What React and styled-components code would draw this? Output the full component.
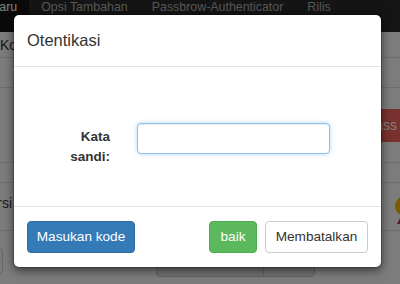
import React from "react";
import styled, { createGlobalStyle } from "styled-components";

const GlobalStyle = createGlobalStyle`
  html, body {
    margin: 0;
    padding: 0;
  }
  body {
    width: 400px;
    height: 284px;
    overflow: hidden;
    font-family: "Liberation Sans", Arial, Helvetica, sans-serif;
    color: #333;
  }
`;

const Page = styled.div`
  position: relative;
  width: 400px;
  height: 284px;
  overflow: hidden;
  background: #f8f8f8;
`;

const Navbar = styled.nav`
  height: 32px;
  background: #282828;
  overflow: hidden;
`;

const NavList = styled.ul`
  display: flex;
  margin: 0 0 0 -17px;
  padding: 0;
  list-style: none;
  height: 100%;
`;

const NavItem = styled.li`
  padding: 0 12px;
  font-size: 12.4px;
  line-height: 20px;
  margin-top: -3px;
  height: 35px;
  white-space: nowrap;
  color: ${(p) => (p.$active ? "#fff" : "#acacac")};
  background: ${(p) => (p.$active ? "#141414" : "transparent")};

  &:first-child {
    padding-left: 8px;
  }
`;

const Row = styled.div`
  box-sizing: border-box;
  height: ${(p) => p.$h}px;
  border-bottom: ${(p) => (p.$last ? "none" : "1px solid #dcdcdc")};
  display: flex;
  align-items: ${(p) => (p.$top ? "flex-start" : "center")};
  justify-content: ${(p) => (p.$top ? "flex-start" : "space-between")};
  font-size: 14px;
`;

const RowText = styled.span`
  margin-left: ${(p) => p.$shift || 0}px;
  padding-bottom: ${(p) => p.$lift || 0}px;
  white-space: nowrap;
  color: #333;
`;

const DangerButton = styled.span`
  margin-left: auto;
  margin-right: -8px;
  height: 33px;
  line-height: 33px;
  padding: 0 11px 0 12px;
  background: #f0625c;
  color: #fff;
  font-size: 14px;
  border-radius: 4px;
`;

const Coin = styled.svg`
  margin-right: -15px;
  margin-top: 6px;
  flex: none;
`;

const GhostInput = styled.div`
  box-sizing: border-box;
  margin: 17px 0 0 -40px;
  width: 43px;
  height: 27px;
  border: 1px solid #cfcfcf;
  border-radius: 4px;
  background: #f4f4f4;
`;

const BtnGroup = styled.div`
  display: flex;
  margin: 9px 0 0 153px;
  height: 37px;
  box-sizing: border-box;
  border: 1px solid #c6c6c6;
  border-radius: 4px;
  background: #e2e2e2;
  overflow: hidden;
`;

const GroupPart = styled.div`
  width: ${(p) => p.$w}px;
  border-left: ${(p) => (p.$first ? "none" : "1px solid #c6c6c6")};
`;

const Backdrop = styled.div`
  position: absolute;
  inset: 0;
  background: rgba(0, 0, 0, 0.5);
  padding: 14px 0 0 13px;
`;

const Dialog = styled.div`
  box-sizing: border-box;
  width: 369px;
  background: #fff;
  background-clip: padding-box;
  border: 1px solid rgba(0, 0, 0, 0.2);
  border-radius: 6px;
  box-shadow: 0 3px 9px rgba(0, 0, 0, 0.5);
`;

const Header = styled.div`
  height: 51px;
  padding: 0 13px;
  display: flex;
  align-items: center;
  border-bottom: 1px solid #e5e5e5;
`;

const Title = styled.h4`
  margin: 0;
  font-size: 16.5px;
  font-weight: 400;
  color: #333;
`;

const Body = styled.div`
  box-sizing: border-box;
  height: 139px;
  padding: 56px 15px 0;
  display: flex;
  align-items: flex-start;
`;

const Label = styled.label`
  box-sizing: border-box;
  width: 81px;
  padding-left: 34px;
  margin-top: 4px;
  text-align: right;
  font-size: 13.5px;
  font-weight: 700;
  line-height: 20px;
  color: #333;
`;

const Input = styled.input`
  box-sizing: border-box;
  margin-left: 27px;
  width: 193px;
  height: 31px;
  padding: 0 10px;
  border: 1px solid #8fc0ee;
  border-radius: 4px;
  outline: none;
  box-shadow: inset 0 1px 1px rgba(0, 0, 0, 0.075), 0 0 4px rgba(102, 175, 233, 0.5);
  font: inherit;
`;

const Footer = styled.div`
  border-top: 1px solid #e5e5e5;
  padding: 14px 13px;
  display: flex;
  justify-content: space-between;
  align-items: center;
`;

const Actions = styled.div`
  display: flex;
  gap: 8px;
`;

const variants = {
  primary: { bg: "#337ab7", border: "#2e6da4", color: "#fff" },
  success: { bg: "#5cb85c", border: "#4cae4c", color: "#fff" },
  default: { bg: "#fff", border: "#ccc", color: "#333" },
};

const Button = styled.button`
  box-sizing: border-box;
  width: ${(p) => p.$w}px;
  height: 32px;
  padding: 0;
  border-radius: 4px;
  font-family: inherit;
  font-size: 13.6px;
  line-height: 30px;
  text-align: center;
  white-space: nowrap;
  cursor: pointer;
  background: ${(p) => variants[p.$variant].bg};
  border: 1px solid ${(p) => variants[p.$variant].border};
  color: ${(p) => variants[p.$variant].color};
`;

export default function App() {
  return (
    <>
      <GlobalStyle />
      <Page>
        <Navbar>
          <NavList>
            <NavItem $active>Baru</NavItem>
            <NavItem>Opsi Tambahan</NavItem>
            <NavItem>Passbrow-Authenticator</NavItem>
            <NavItem>Rilis</NavItem>
          </NavList>
        </Navbar>
        <Row $h={26}>
          <RowText>Konfigurasi Akun</RowText>
        </Row>
        <Row $h={30} />
        <Row $h={75}>
          <DangerButton>Pass</DangerButton>
        </Row>
        <Row $h={20} />
        <Row $h={48}>
          <RowText $shift={-19} $lift={8}>
            Versi
          </RowText>
          <Coin width="20" height="28" viewBox="0 0 20 28">
            <circle cx="10" cy="10" r="10" fill="#f5b400" />
            <path d="M2 28 L5 22 L8 28 Z" fill="#c0207a" />
          </Coin>
        </Row>
        <Row $h={53} $last $top>
          <GhostInput />
          <BtnGroup>
            <GroupPart $w={106} $first />
            <GroupPart $w={50} />
          </BtnGroup>
        </Row>

        <Backdrop>
          <Dialog>
            <Header>
              <Title>Otentikasi</Title>
            </Header>
            <Body>
              <Label htmlFor="pw">Kata sandi:</Label>
              <Input id="pw" type="password" />
            </Body>
            <Footer>
              <Button $variant="primary" $w={108}>
                Masukan kode
              </Button>
              <Actions>
                <Button $variant="success" $w={48}>
                  baik
                </Button>
                <Button $variant="default" $w={103}>
                  Membatalkan
                </Button>
              </Actions>
            </Footer>
          </Dialog>
        </Backdrop>
      </Page>
    </>
  );
}
